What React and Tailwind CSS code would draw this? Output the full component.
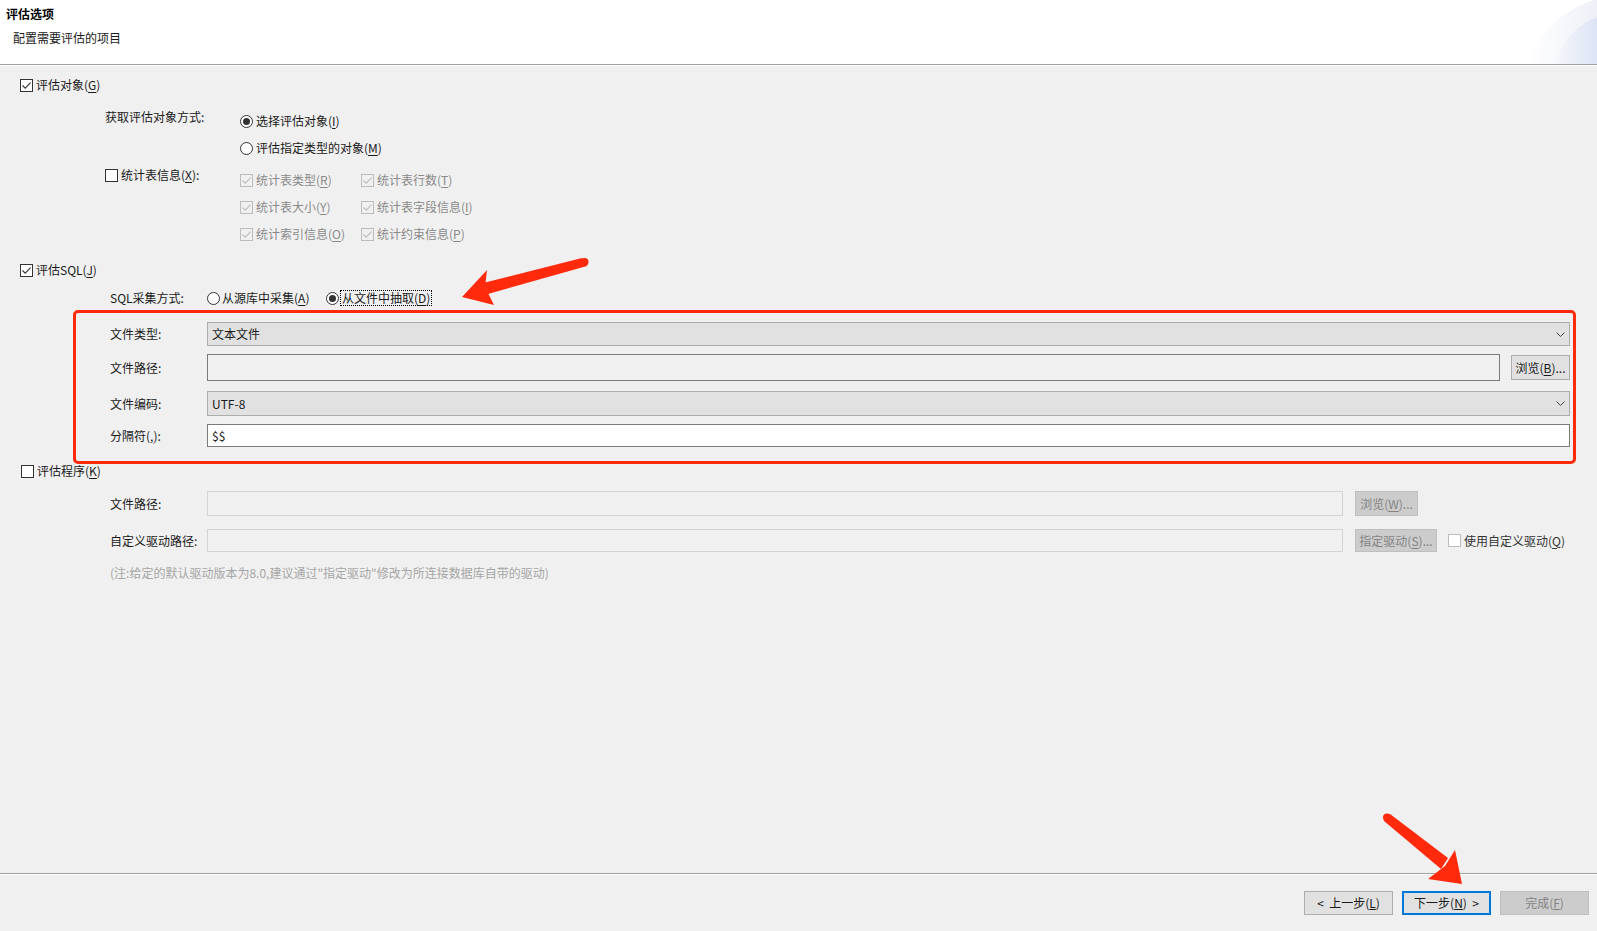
import React from "react";

// ─── Small Win32-style controls ───────────────────────────────────────────────
function Check({ checked, disabled, tone }) {
  const stroke = disabled ? "#bcbcbc" : "#333333";
  return (
    <span
      className={`w-[13px] h-[13px] border flex items-center justify-center shrink-0 ${
        disabled ? "border-[#bcbcbc]" : tone === "light" ? "border-[#bcbcbc] bg-white" : "border-[#333333] bg-white"
      }`}
    >
      {checked && (
        <svg width="11" height="11" viewBox="0 0 11 11">
          <path d="M1.5 5.5 L4.2 8.2 L9.6 2.6" fill="none" stroke={stroke} strokeWidth="1.1" />
        </svg>
      )}
    </span>
  );
}

function Radio({ checked }) {
  return (
    <span className="w-[13px] h-[13px] rounded-full border border-[#333333] bg-white flex items-center justify-center shrink-0">
      {checked && <span className="w-[7px] h-[7px] rounded-full bg-[#333333]" />}
    </span>
  );
}

// label like 评估对象(G) with the access key underlined
function Key({ text, k, tail = "" }) {
  return (
    <span className="whitespace-nowrap">
      {text}(<u className="underline-offset-2">{k}</u>){tail}
    </span>
  );
}

function Chevron() {
  return (
    <svg width="9" height="5" viewBox="0 0 9 5" className="shrink-0">
      <path d="M0.5 0.5 L4.5 4.5 L8.5 0.5" fill="none" stroke="#444" strokeWidth="1" />
    </svg>
  );
}

const DISABLED_OPTS = [
  [{ t: "统计表类型", k: "R" }, { t: "统计表行数", k: "T" }],
  [{ t: "统计表大小", k: "Y" }, { t: "统计表字段信息", k: "I" }],
  [{ t: "统计索引信息", k: "O" }, { t: "统计约束信息", k: "P" }],
];

// ─── Page ─────────────────────────────────────────────────────────────────────
export default function App() {
  return (
    <div className="relative w-[1597px] h-[931px] bg-[#f0f0f0] flex flex-col overflow-hidden text-[12px] leading-[16px] text-[#1a1a1a] font-['Noto_Sans_CJK_SC',sans-serif]">
      {/* Header */}
      <div className="relative h-[64px] bg-white shrink-0 pt-[6px]">
        <div className="pl-[6px] font-bold text-black">评估选项</div>
        <div className="pl-[13px] mt-[8px]">配置需要评估的项目</div>
        <svg className="absolute right-0 top-0" width="100" height="64" viewBox="0 0 100 64">
          <defs>
            <linearGradient id="g1" x1="0" y1="0" x2="1" y2="0">
              <stop offset="0" stopColor="#ffffff" />
              <stop offset="1" stopColor="#eef0f7" />
            </linearGradient>
            <linearGradient id="g2" x1="0" y1="0" x2="1" y2="0">
              <stop offset="0" stopColor="#f6f7fb" />
              <stop offset="1" stopColor="#dce3f4" />
            </linearGradient>
          </defs>
          <path d="M30 64 Q48 16 97 0 L100 0 L100 64 Z" fill="url(#g1)" />
          <path d="M58 64 Q70 28 100 17 L100 64 Z" fill="url(#g2)" />
        </svg>
      </div>
      <div className="h-px bg-[#a0a0a0] shrink-0" />
      <div className="h-px bg-white shrink-0" />

      {/* Body */}
      <div className="flex-1 flex flex-col">
        {/* 评估对象 */}
        <div className="mt-[11px] pl-[20px] flex items-center gap-[3px]">
          <Check checked />
          <Key text="评估对象" k="G" />
        </div>

        <div className="mt-[16px] pl-[105px] flex">
          <div className="w-[135px]">获取评估对象方式:</div>
          <div className="pt-[4px] flex flex-col gap-[11px]">
            <div className="flex items-center gap-[3px]">
              <Radio checked />
              <Key text="选择评估对象" k="I" />
            </div>
            <div className="flex items-center gap-[3px]">
              <Radio />
              <Key text="评估指定类型的对象" k="M" />
            </div>
          </div>
        </div>

        <div className="mt-[11px] pl-[105px] flex">
          <div className="w-[135px] flex items-center gap-[3px] self-start">
            <Check />
            <Key text="统计表信息" k="X" tail=":" />
          </div>
          <div className="pt-[5px] grid grid-cols-[121px_auto] gap-y-[11px] text-[#8a8a8a]">
            {DISABLED_OPTS.flat().map((o) => (
              <div key={o.k} className="flex items-center gap-[3px]">
                <Check checked disabled />
                <Key text={o.t} k={o.k} />
              </div>
            ))}
          </div>
        </div>

        {/* 评估SQL */}
        <div className="mt-[20px] pl-[20px] flex items-center gap-[3px]">
          <Check checked />
          <Key text="评估SQL" k="J" />
        </div>

        <div className="mt-[12px] pl-[110px] flex items-center">
          <div className="w-[97px]">SQL采集方式:</div>
          <div className="w-[119px] flex items-center gap-[2px]">
            <Radio />
            <Key text="从源库中采集" k="A" />
          </div>
          <div className="flex items-center gap-[1px]">
            <Radio checked />
            <span className="border border-dotted border-black px-[1px] leading-[14px]">
              <Key text="从文件中抽取" k="D" />
            </span>
          </div>
        </div>

        <div className="mt-[16px] pl-[110px] pr-[27px] flex flex-col">
          <div className="flex items-center h-[24px]">
            <div className="w-[97px]">文件类型:</div>
            <div className="flex-1 h-full bg-[#e1e1e1] border border-[#adadad] flex items-center justify-between pl-[4px] pr-[4px]">
              <span>文本文件</span>
              <Chevron />
            </div>
          </div>
          <div className="mt-[8px] flex items-center h-[27px]">
            <div className="w-[97px]">文件路径:</div>
            <div className="flex-1 h-full bg-[#f0f0f0] border border-[#7a7a7a]" />
            <button className="ml-[11px] w-[59px] h-[25px] bg-[#e1e1e1] border border-[#adadad] flex items-center justify-center">
              <Key text="浏览" k="B" tail="..." />
            </button>
          </div>
          <div className="mt-[10px] flex items-center h-[25px]">
            <div className="w-[97px]">文件编码:</div>
            <div className="flex-1 h-full bg-[#e1e1e1] border border-[#adadad] flex items-center justify-between pl-[4px] pr-[4px]">
              <span>UTF-8</span>
              <Chevron />
            </div>
          </div>
          <div className="mt-[8px] flex items-center h-[23px]">
            <div className="w-[97px]">
              <Key text="分隔符" k="," tail=":" />
            </div>
            <div className="flex-1 h-full bg-white border border-[#7a7a7a] flex items-center pl-[4px]">$$</div>
          </div>
        </div>

        {/* 评估程序 */}
        <div className="mt-[16px] pl-[21px] flex items-center gap-[3px]">
          <Check />
          <Key text="评估程序" k="K" />
        </div>

        <div className="mt-[12px] pl-[110px] flex items-center h-[25px]">
          <div className="w-[97px]">文件路径:</div>
          <div className="w-[1136px] h-full bg-[#f0f0f0] border border-[#d4d4d4]" />
          <button className="ml-[12px] w-[63px] h-[25px] bg-[#cccccc] border border-[#bfbfbf] text-[#838383] flex items-center justify-center">
            <Key text="浏览" k="W" tail="..." />
          </button>
        </div>
        <div className="mt-[13px] pl-[110px] flex items-center h-[23px]">
          <div className="w-[97px]">自定义驱动路径:</div>
          <div className="w-[1136px] h-full bg-[#f0f0f0] border border-[#d4d4d4]" />
          <button className="ml-[12px] w-[82px] h-[23px] bg-[#cccccc] border border-[#bfbfbf] text-[#838383] flex items-center justify-center">
            <Key text="指定驱动" k="S" tail="..." />
          </button>
          <div className="ml-[11px] flex items-center gap-[3px] text-[#333333]">
            <Check tone="light" />
            <Key text="使用自定义驱动" k="Q" />
          </div>
        </div>
        <div className="mt-[13px] pl-[110px] text-[#a6a6a6]">
          (注:给定的默认驱动版本为8.0,建议通过"指定驱动"修改为所连接数据库自带的驱动)
        </div>
      </div>

      {/* Footer */}
      <div className="h-[58px] shrink-0 flex flex-col">
        <div className="h-px bg-[#a0a0a0]" />
        <div className="h-px bg-white" />
        <div className="mt-[16px] flex justify-end gap-[9px] pr-[8px]">
          <button className="w-[89px] h-[24px] bg-[#e1e1e1] border border-[#adadad] flex items-center justify-center">
            <span>&lt;&nbsp; 上一步(<u>L</u>)</span>
          </button>
          <button className="w-[89px] h-[24px] bg-[#e1e1e1] border-2 border-[#0078d7] flex items-center justify-center">
            <span>下一步(<u>N</u>)&nbsp; &gt;</span>
          </button>
          <button className="w-[89px] h-[24px] bg-[#cccccc] border border-[#bfbfbf] text-[#838383] flex items-center justify-center">
            <span>完成(<u>F</u>)</span>
          </button>
        </div>
      </div>

      {/* Annotation overlay: red frame and arrows */}
      <div className="absolute left-[73px] top-[310px] w-[1503px] h-[154px] border-[3px] border-[#ff2a0c] rounded-[5px] pointer-events-none" />
      <svg className="absolute left-0 top-0 pointer-events-none" width="1597" height="931" viewBox="0 0 1597 931">
        <path d="M582 258 L587 266 L488 294 L483 283 Z" fill="#ff2a0c" />
        <circle cx="584.5" cy="262" r="4" fill="#ff2a0c" />
        <path d="M462 297 L487 270 L485 287 L494 305 Z" fill="#ff2a0c" />
        <path d="M1384 821 L1390 814 L1448 858 L1441 869 Z" fill="#ff2a0c" />
        <circle cx="1387" cy="817.5" r="4" fill="#ff2a0c" />
        <path d="M1462 884 L1455 850 L1445 866 L1428 879 Z" fill="#ff2a0c" />
      </svg>
    </div>
  );
}
